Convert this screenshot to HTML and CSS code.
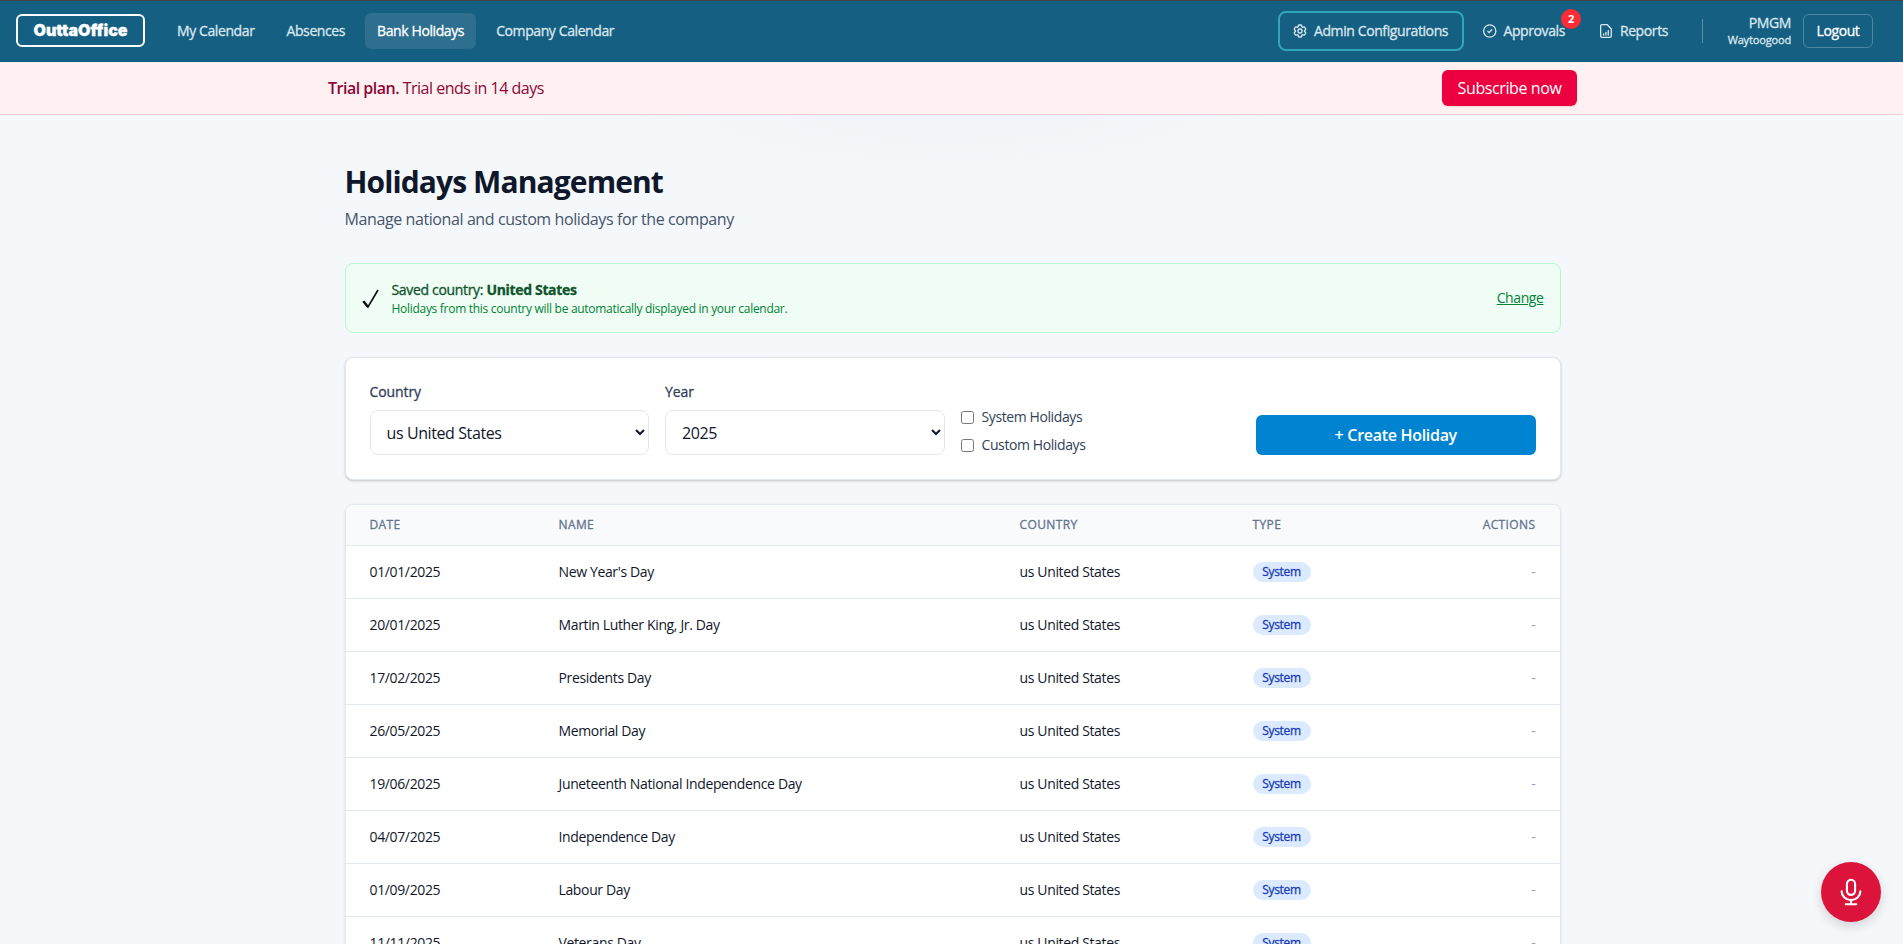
FILE: index.html
```
<!DOCTYPE html>
<html lang="en">
<head>
    <meta charset="UTF-8">
    <meta name="viewport" content="width=device-width, initial-scale=1.0">
    <title>OuttaOffice - Bank Holidays</title>
    <link rel="stylesheet" href="styles.css">
</head>
<body>
    <header class="navbar">
        <a class="logo" href="#">OuttaOffice</a>
        <nav class="nav-links">
            <a href="#">My Calendar</a>
            <a href="#">Absences</a>
            <a href="#" class="active">Bank Holidays</a>
            <a href="#">Company Calendar</a>
        </nav>
        <div class="nav-right">
            <a href="#" class="admin-link">
                <svg width="16" height="16" viewBox="0 0 24 24" fill="none" stroke="currentColor" stroke-width="2" stroke-linecap="round" stroke-linejoin="round"><path d="M9.594 3.94c.09-.542.56-.94 1.11-.94h2.593c.55 0 1.02.398 1.11.94l.213 1.281c.063.374.313.686.645.87.074.04.147.083.22.127.325.196.72.257 1.075.124l1.217-.456a1.125 1.125 0 0 1 1.37.49l1.296 2.247a1.125 1.125 0 0 1-.26 1.431l-1.003.827c-.293.241-.438.613-.43.992a7.723 7.723 0 0 1 0 .255c-.008.378.137.75.43.991l1.004.827c.424.35.534.955.26 1.43l-1.298 2.247a1.125 1.125 0 0 1-1.369.491l-1.217-.456c-.355-.133-.75-.072-1.076.124a6.47 6.47 0 0 1-.22.128c-.331.183-.581.495-.644.869l-.213 1.281c-.09.543-.56.94-1.11.94h-2.594c-.55 0-1.019-.398-1.11-.94l-.213-1.281c-.062-.374-.312-.686-.644-.87a6.52 6.52 0 0 1-.22-.127c-.325-.196-.72-.257-1.076-.124l-1.217.456a1.125 1.125 0 0 1-1.369-.49l-1.297-2.247a1.125 1.125 0 0 1 .26-1.431l1.004-.827c.292-.24.437-.613.43-.991a6.932 6.932 0 0 1 0-.255c.007-.38-.138-.751-.43-.992l-1.004-.827a1.125 1.125 0 0 1-.26-1.43l1.297-2.247a1.125 1.125 0 0 1 1.37-.491l1.216.456c.356.133.751.072 1.076-.124.072-.044.146-.086.22-.128.332-.183.582-.495.644-.869l.214-1.28Z"/><path d="M15 12a3 3 0 1 1-6 0 3 3 0 0 1 6 0Z"/></svg>
                <span>Admin Configurations</span>
            </a>
            <a href="#" class="approvals-link">
                <svg width="16" height="16" viewBox="0 0 24 24" fill="none" stroke="currentColor" stroke-width="2" stroke-linecap="round" stroke-linejoin="round"><circle cx="12" cy="12" r="9.5"/><path d="M9 12.5l2 2 4-4.5"/></svg>
                <span>Approvals</span>
                <span class="count">2</span>
            </a>
            <a href="#" class="reports-link">
                <svg width="16" height="16" viewBox="0 0 24 24" fill="none" stroke="currentColor" stroke-width="2" stroke-linecap="round" stroke-linejoin="round"><path d="M14 2.5H6a2 2 0 0 0-2 2v15a2 2 0 0 0 2 2h12a2 2 0 0 0 2-2V9z"/><path d="M8.5 18v-1.500M12 18v-4M15.500 18v-6.500"/></svg>
                <span>Reports</span>
            </a>
            <div class="user">
                <div class="user-name">PMGM</div>
                <div class="user-company">Waytoogood</div>
            </div>
            <button class="logout">Logout</button>
        </div>
    </header>

    <div class="trial">
        <div class="trial-inner">
            <p><strong>Trial plan.</strong> Trial ends in 14 days</p>
            <button class="subscribe">Subscribe now</button>
        </div>
    </div>

    <main>
        <h1>Holidays Management</h1>
        <p class="subtitle">Manage national and custom holidays for the company</p>

        <div class="saved">
            <svg class="check" width="18" height="20" viewBox="0 0 18 20" fill="none" stroke="#0b0b14" stroke-width="1.6"><path d="M1 12.5 6 18 16 1"/><path d="M1.5 12.2 6 18" stroke-width="2.2"/></svg>
            <div class="saved-text">
                <p class="saved-title">Saved country: <strong>United States</strong></p>
                <p class="saved-note">Holidays from this country will be automatically displayed in your calendar.</p>
            </div>
            <a href="#">Change</a>
        </div>

        <form class="filters">
            <div class="field">
                <label for="country">Country</label>
                <select id="country"><option>us United States</option></select>
            </div>
            <div class="field">
                <label for="year">Year</label>
                <select id="year"><option>2025</option></select>
            </div>
            <div class="checks">
                <label><input type="checkbox"><span>System Holidays</span></label>
                <label><input type="checkbox"><span>Custom Holidays</span></label>
            </div>
            <button type="button" class="create">+ Create Holiday</button>
        </form>

        <div class="table-card">
            <table>
                <thead>
                    <tr><th class="col-date">Date</th><th class="col-name">Name</th><th class="col-country">Country</th><th class="col-type">Type</th><th class="actions">Actions</th></tr>
                </thead>
                <tbody>
                    <tr><td>01/01/2025</td><td>New Year's Day</td><td>us United States</td><td><span class="badge">System</span></td><td class="actions">-</td></tr>
                    <tr><td>20/01/2025</td><td>Martin Luther King, Jr. Day</td><td>us United States</td><td><span class="badge">System</span></td><td class="actions">-</td></tr>
                    <tr><td>17/02/2025</td><td>Presidents Day</td><td>us United States</td><td><span class="badge">System</span></td><td class="actions">-</td></tr>
                    <tr><td>26/05/2025</td><td>Memorial Day</td><td>us United States</td><td><span class="badge">System</span></td><td class="actions">-</td></tr>
                    <tr><td>19/06/2025</td><td>Juneteenth National Independence Day</td><td>us United States</td><td><span class="badge">System</span></td><td class="actions">-</td></tr>
                    <tr><td>04/07/2025</td><td>Independence Day</td><td>us United States</td><td><span class="badge">System</span></td><td class="actions">-</td></tr>
                    <tr><td>01/09/2025</td><td>Labour Day</td><td>us United States</td><td><span class="badge">System</span></td><td class="actions">-</td></tr>
                    <tr><td>11/11/2025</td><td>Veterans Day</td><td>us United States</td><td><span class="badge">System</span></td><td class="actions">-</td></tr>
                </tbody>
            </table>
        </div>
    </main>

    <button class="mic" aria-label="Voice">
        <svg width="28" height="28" viewBox="0 0 24 24" fill="none" stroke="currentColor" stroke-width="1.8" stroke-linecap="round" stroke-linejoin="round"><rect x="8.500" y="1.500" width="7" height="13" rx="3.500"/><path d="M4 11.500a8 7.500 0 0 0 16 0M12 19v3.500M7.500 22.500h9"/></svg>
    </button>
</body>
</html>
```
FILE: styles.css
```
*{
    margin:0;
    padding:0;
    box-sizing:border-box;
}
body{
    height:944px;
    overflow:hidden;
    font-family:"Open Sans","Noto Sans",sans-serif;
    font-size:16px;
    line-height:24px;
    letter-spacing:-0.4px;
    color:#0f172b;
    background:radial-gradient(ellipse 420px 80px at 952px 112px, #f0f4f8, rgba(240,244,248,0)), linear-gradient(#f4f8fb 114px, #f5f7fb 400px);
}
a{
    color:inherit;
    text-decoration:none;
}
button,select{
    font:inherit;
    letter-spacing:inherit;
}
/* medium weight */
.navbar,.saved-title,.field label,th,.badge{
    -webkit-text-stroke:0.3px currentColor;
}
.navbar{
    height:62px;
    border-top:1px solid #444;
    background:#155f82;
    color:#dce7ed;
    display:flex;
    align-items:center;
    padding:0 30px 1px 16px;
    font-size:14px;
}
.logo{
    width:129px;
    height:33px;
    border:2px solid #fff;
    border-radius:6px;
    color:#fff;
    font:900 16px/28px Inter,sans-serif;
    letter-spacing:0;
    text-align:center;
    margin-top:-2px;
}
.nav-links{
    display:flex;
    gap:8px;
    margin-left:20px;
}
.nav-links a{
    height:36px;
    line-height:36px;
    padding:0 12px;
    border-radius:6px;
}
.nav-links .active{
    background:#2e6f8f;
    color:#fff;
}
.nav-right{
    display:flex;
    align-items:center;
    margin-left:auto;
}
.nav-right a{
    display:flex;
    align-items:center;
    gap:6px;
}
.admin-link{
    width:186px;
    height:40px;
    padding-left:12px;
    border:2px solid #32a5bd;
    border-radius:8px;
}
.approvals-link{
    position:relative;
    margin-left:18px;
    width:83px;
}
.count{
    position:absolute;
    right:-16px;
    top:-10px;
    width:20px;
    height:20px;
    border-radius:50%;
    background:#fb2c36;
    color:#fff;
    font-size:11px;
    font-weight:700;
    line-height:20px;
    text-align:center;
    -webkit-text-stroke:0;
}
.reports-link{
    margin-left:33px;
    width:70px;
}
.user{
    border-left:1px solid #5c8fa7;
    margin-left:34px;
    width:89px;
    height:24px;
    display:flex;
    flex-direction:column;
    justify-content:center;
    text-align:right;
    line-height:17px;
}
.user-company{
    font-size:11px;
    letter-spacing:-0.15px;
}
.logout{
    width:70px;
    height:34px;
    margin-left:12px;
    border:1px solid #4f87a1;
    border-radius:6px;
    background:none;
    color:#fff;
}
.trial{
    height:53px;
    background:#fff0f1;
    border-bottom:1px solid #ffccd3;
    color:#8b0836;
}
.trial-inner{
    width:1251px;
    height:100%;
    margin:0 auto;
    padding-left:2px;
    display:flex;
    align-items:center;
    justify-content:space-between;
}
.trial p{
    letter-spacing:-0.5px;
}
.trial strong{
    font-weight:600;
}
.subscribe{
    width:135px;
    height:36px;
    border:none;
    border-radius:6px;
    background:#ec003f;
    color:#fff;
    box-shadow:0 1px 2px rgba(0,0,0,0.1);
}
main{
    width:1218px;
    margin:0 auto;
    padding:48px 0 0 2px;
}
h1{
    font-size:30px;
    line-height:38px;
    letter-spacing:-0.9px;
}
.subtitle{
    margin-top:6px;
    color:#45556c;
}
.saved{
    height:70px;
    margin-top:32px;
    padding:0 16px;
    display:flex;
    align-items:center;
    border:1px solid #b9f8cf;
    border-radius:8px;
    background:#f0fdf4;
    color:#008236;
}
.check{
    margin-top:2px;
}
.saved-text{
    flex:1;
    margin-left:12px;
}
.saved-title{
    font-size:14px;
    line-height:20px;
    letter-spacing:-0.33px;
    color:#0d542b;
}
.saved-note{
    font-size:12px;
    line-height:17px;
    letter-spacing:-0.29px;
}
.saved a{
    font-size:14px;
    text-decoration:underline;
}
.filters{
    height:123px;
    margin-top:24px;
    padding:24px;
    display:grid;
    grid-template-columns:repeat(4,1fr);
    gap:16px;
    align-items:end;
    border:1px solid #e2e8f0;
    border-radius:8px;
    background:#fff;
    box-shadow:0 1px 3px rgba(0,0,0,0.12),0 1px 2px rgba(0,0,0,0.1);
}
.field label{
    display:block;
    margin-bottom:8px;
    font-size:14px;
    line-height:20px;
    letter-spacing:-0.1px;
    color:#314158;
}
select{
    display:block;
    width:100%;
    height:45px;
    padding:1px 12px 0;
    border:1px solid #e5e7eb;
    border-radius:8px;
    background:#fff;
    color:#0f172b;
}
.checks{
    display:flex;
    flex-direction:column;
    gap:8px;
}
.checks label{
    display:flex;
    align-items:center;
    gap:8px;
    font-size:14px;
    line-height:20px;
    color:#314158;
}
.checks input{
    width:13px;
    height:13px;
}
.create{
    height:40px;
    border:none;
    border-radius:6px;
    background:#0084d1;
    color:#fff;
    font-weight:600;
    letter-spacing:-0.3px;
}
.table-card{
    margin-top:24px;
    border:1px solid #e2e8f0;
    border-radius:8px;
    background:#fff;
    box-shadow:0 1px 3px rgba(0,0,0,0.1);
    overflow:hidden;
}
table{
    width:100%;
    table-layout:fixed;
    border-collapse:collapse;
}
th{
    height:40px;
    background:#f8fafc;
    padding:1px 24px 0;
    font-size:12px;
    font-weight:400;
    text-align:left;
    text-transform:uppercase;
    color:#62748e;
    letter-spacing:0.4px;
}
td{
    height:53px;
    padding:0 24px;
    border-top:1px solid #e2e8f0;
    font-size:14px;
    letter-spacing:-0.36px;
}
.col-date{
    width:189px;
}
.col-name{
    width:461px;
}
.col-country{
    width:233px;
}
.col-type{
    width:170px;
}
.actions{
    text-align:right;
}
td.actions{
    color:#90a1b9;
}
.badge{
    display:block;
    width:58px;
    height:20px;
    line-height:20px;
    border-radius:10px;
    background:#dbeafe;
    color:#193cb8;
    font-size:12px;
    text-align:center;
    letter-spacing:-0.3px;
}
.mic{
    position:fixed;
    right:22px;
    bottom:22px;
    width:60px;
    height:60px;
    border:none;
    border-radius:50%;
    background:#dc143c;
    color:#fff;
    display:flex;
    align-items:center;
    justify-content:center;
    box-shadow:0 4px 12px rgba(0,0,0,0.15);
}
```
